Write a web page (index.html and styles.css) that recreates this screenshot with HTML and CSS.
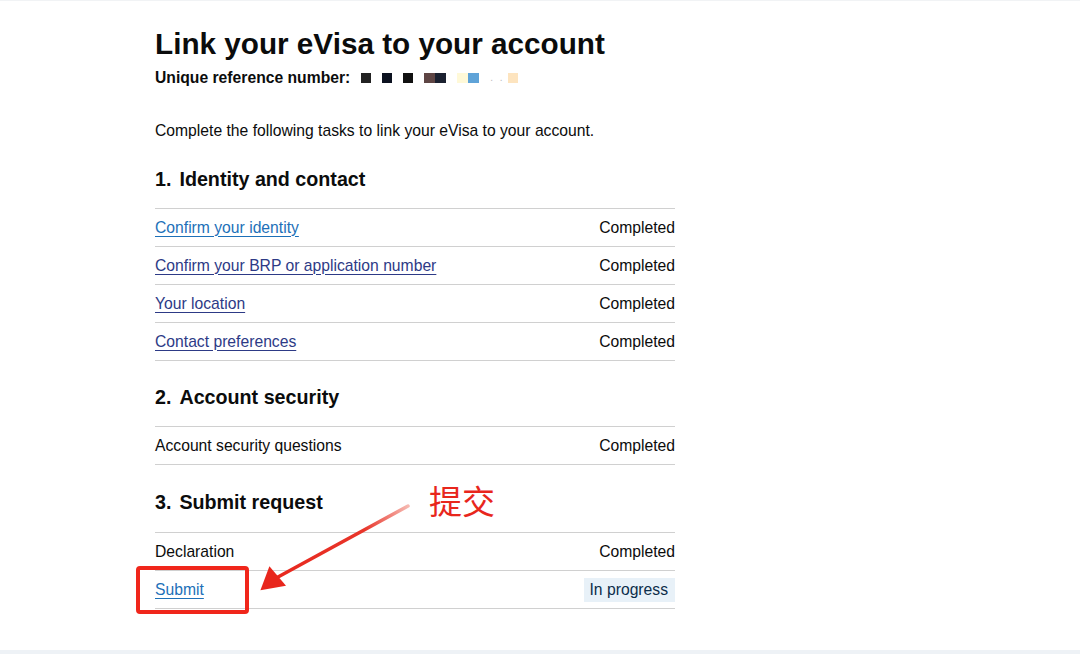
FILE: index.html
```html
<!DOCTYPE html>
<html>
<head>
<meta charset="utf-8">
<link rel="stylesheet" href="styles.css">
</head>
<body>
<div class="page">
  <main class="content">
    <h1 class="title">Link your eVisa to your account</h1>
    <p class="ref">Unique reference number:
      <span class="ref-codes">
        <span class="sq" style="background:#222"></span>
        <span class="sq" style="background:#0c1220"></span>
        <span class="sq" style="background:#111"></span>
        <span class="sq pair"><i style="background:#5e4544"></i><i style="background:#1b2130"></i></span>
        <span class="sq pair"><i style="background:#fff9d8"></i><i style="background:#5fa3d8"></i></span>
        <span class="dots">. .</span>
        <span class="sq" style="background:#fde4bf"></span>
      </span>
    </p>
    <p class="intro">Complete the following tasks to link your eVisa to your account.</p>

    <section class="section">
      <h2 class="sec-title"><span class="num">1.</span>Identity and contact</h2>
      <ul class="tasks">
        <li class="task"><a class="task-link" href="#">Confirm your identity</a><span class="status">Completed</span></li>
        <li class="task"><a class="task-link alt" href="#">Confirm your BRP or application number</a><span class="status">Completed</span></li>
        <li class="task"><a class="task-link alt" href="#">Your location</a><span class="status">Completed</span></li>
        <li class="task"><a class="task-link alt" href="#">Contact preferences</a><span class="status">Completed</span></li>
      </ul>
    </section>

    <section class="section">
      <h2 class="sec-title"><span class="num">2.</span>Account security</h2>
      <ul class="tasks">
        <li class="task"><span class="task-text">Account security questions</span><span class="status">Completed</span></li>
      </ul>
    </section>

    <section class="section last">
      <h2 class="sec-title"><span class="num">3.</span>Submit request</h2>
      <ul class="tasks">
        <li class="task"><span class="task-text">Declaration</span><span class="status">Completed</span></li>
        <li class="task"><a class="task-link" href="#">Submit</a><span class="status tag">In progress</span></li>
      </ul>
    </section>
  </main>

  <div class="highlight-box"></div>
  <svg class="arrow" width="1080" height="654" viewBox="0 0 1080 654">
    <defs>
      <linearGradient id="ag" x1="408" y1="505" x2="262" y2="585" gradientUnits="userSpaceOnUse">
        <stop offset="0" stop-color="#f6b8b0"/>
        <stop offset="0.3" stop-color="#e8352a"/>
        <stop offset="1" stop-color="#e8261c"/>
      </linearGradient>
    </defs>
    <path d="M408 505 L278 576" stroke="url(#ag)" stroke-width="3.5" fill="none" stroke-linecap="round"/>
    <path d="M259 587 L272 565 L285 587 Z" fill="#e8261c" transform="rotate(-10 272 580)"/>
  </svg>
  <div class="note">提交</div>
  <div class="footer-strip"></div>
</div>
</body>
</html>
```

FILE: styles.css
```css
* { box-sizing: border-box; }
html, body { margin: 0; padding: 0; }
body {
  background: #ffffff;
  font-family: "Liberation Sans", Arial, sans-serif;
  color: #0b0c0c;
  width: 1080px;
  height: 654px;
  overflow: hidden;
}
.page {
  position: relative;
  width: 1080px;
  height: 654px;
  border-top: 1px solid #f1f3f5;
}
.content {
  width: 520px;
  margin-left: 155px;
  padding-top: 25px;
}
.title {
  font-size: 29.7px;
  font-weight: 700;
  margin: 0;
  line-height: 36px;
}
.ref {
  margin: 5px 0 0;
  font-size: 15.7px;
  font-weight: 700;
  line-height: 22px;
  display: flex;
  align-items: center;
}
.ref-codes {
  display: inline-flex;
  align-items: center;
  margin-left: 11px;
}
.sq {
  display: inline-block;
  width: 10px;
  height: 10px;
  margin-right: 11px;
}
.sq.pair { width: 22px; display: inline-flex; }
.sq.pair i { flex: 1; }
.dots { color: #bbb; font-size: 10px; margin-right: 3px; font-weight: 400; letter-spacing: 2px; }
.intro {
  margin: 30px 0 0;
  font-size: 15.7px;
  line-height: 24px;
}
.section { margin-top: 24px; }
.section.last { margin-top: 25px; }
.section.last .sec-title { margin-bottom: 17px; }
.sec-title {
  margin: 0 0 16px;
  font-size: 19.7px;
  font-weight: 700;
  line-height: 25px;
}
.num { margin-right: 8px; }
.tasks {
  list-style: none;
  margin: 0;
  padding: 0;
  border-top: 1px solid #d0d0d0;
}
.task {
  display: flex;
  justify-content: space-between;
  align-items: center;
  height: 38px;
  border-bottom: 1px solid #d0d0d0;
  font-size: 15.7px;
}
.task-link {
  color: #1d70b8;
  text-decoration: underline;
  text-underline-offset: 3px;
  text-decoration-thickness: 1px;
}
.task-link.alt { color: #2d3a86; }
.status { color: #0b0c0c; }
.tag {
  background: #e8f1f8;
  padding: 2px 7px 2px 6px;
  color: #0c2d4a;
  line-height: 20px;
}
.highlight-box {
  position: absolute;
  left: 136px;
  top: 565px;
  width: 113px;
  height: 48px;
  border: 4px solid #f0261b;
  border-radius: 4px;
}
.arrow {
  position: absolute;
  left: 0;
  top: 0;
  pointer-events: none;
}
.note {
  position: absolute;
  left: 429px;
  top: 477px;
  font-family: "Noto Sans CJK SC", sans-serif;
  font-size: 33px;
  line-height: 44px;
  color: #e8261c;
}
.footer-strip {
  position: absolute;
  left: 0;
  bottom: 0;
  width: 1080px;
  height: 4px;
  background: #eef2f6;
}
```
